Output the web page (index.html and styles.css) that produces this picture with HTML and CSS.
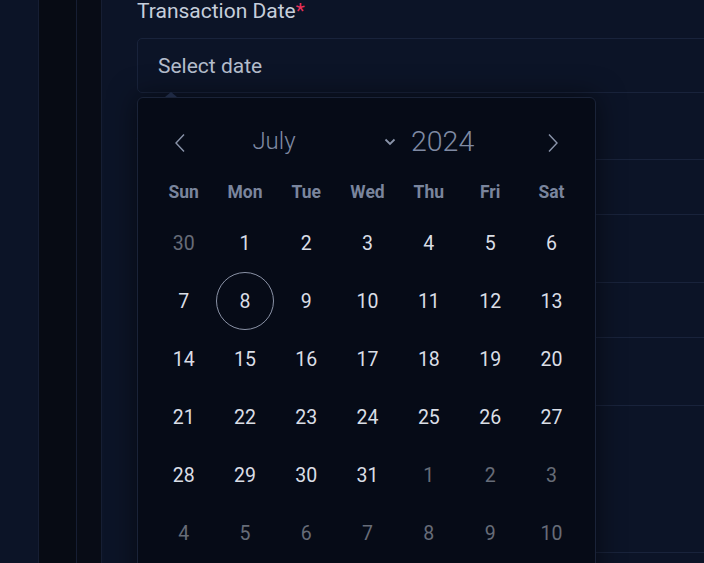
FILE: index.html
```html
<!DOCTYPE html>
<html lang="en">
<head>
<meta charset="utf-8">
<title>Transaction Date</title>
<link rel="stylesheet" href="styles.css">
</head>
<body>
<div class="page">
  <div class="strip strip-a"></div>
  <div class="strip strip-b"></div>
  <div class="strip strip-c"></div>
  <main class="main">
    <div class="field field-date">
      <label class="label">Transaction Date<span class="req">*</span></label>
      <div class="input">Select date</div>
      <div class="picker">
        <div class="caret"></div>
        <div class="cal-head">
          <button class="nav prev" aria-label="Previous month">
            <svg width="12" height="20" viewBox="0 0 12 20"><path d="M10 1.5 L2 10 L10 18.5" fill="none" stroke="#8a94aa" stroke-width="1.4"/></svg>
          </button>
          <div class="month">July</div>
          <div class="chev">
            <svg width="12" height="8" viewBox="0 0 12 8"><path d="M1.5 1.5 L6 6 L10.5 1.5" fill="none" stroke="#8a94aa" stroke-width="1.8"/></svg>
          </div>
          <div class="year">2024</div>
          <button class="nav next" aria-label="Next month">
            <svg width="12" height="20" viewBox="0 0 12 20"><path d="M2 1.5 L10 10 L2 18.5" fill="none" stroke="#8a94aa" stroke-width="1.4"/></svg>
          </button>
        </div>
        <div class="grid weekdays">
          <div>Sun</div><div>Mon</div><div>Tue</div><div>Wed</div><div>Thu</div><div>Fri</div><div>Sat</div>
        </div>
        <div class="grid days">
          <div class="muted">30</div><div>1</div><div>2</div><div>3</div><div>4</div><div>5</div><div>6</div>
          <div>7</div><div class="today"><span>8</span></div><div>9</div><div>10</div><div>11</div><div>12</div><div>13</div>
          <div>14</div><div>15</div><div>16</div><div>17</div><div>18</div><div>19</div><div>20</div>
          <div>21</div><div>22</div><div>23</div><div>24</div><div>25</div><div>26</div><div>27</div>
          <div>28</div><div>29</div><div>30</div><div>31</div><div class="muted">1</div><div class="muted">2</div><div class="muted">3</div>
          <div class="muted">4</div><div class="muted">5</div><div class="muted">6</div><div class="muted">7</div><div class="muted">8</div><div class="muted">9</div><div class="muted">10</div>
        </div>
      </div>
    </div>
    <div class="field">
      <label class="label">Amount</label>
      <div class="input"></div>
    </div>
    <div class="field">
      <label class="label">Category</label>
      <div class="input"></div>
    </div>
    <div class="field">
      <label class="label">Notes</label>
      <div class="input textarea"></div>
    </div>
  </main>
</div>
</body>
</html>
```

FILE: styles.css
```css
html, body {
  margin: 0;
  padding: 0;
  background: #0c1427;
  overflow: hidden;
  height: 563px;
}
body {
  font-family: Roboto, "Liberation Sans", sans-serif;
}
.page {
  display: flex;
  height: 563px;
}
.strip {
  flex: none;
  height: 100%;
}
.strip-a {
  width: 38px;
  background: #0c1427;
  border-right: 1px solid #161e33;
}
.strip-b {
  width: 37px;
  background: #070b14;
  border-right: 1px solid #161e33;
}
.strip-c {
  width: 24px;
  background: #080c16;
  border-right: 1px solid #161e33;
}
.main {
  flex: none;
  width: 620px;
  padding-left: 35px;
  margin-top: -2px;
}
.field {
  position: relative;
  margin-bottom: 27px;
}
.field-date {
  margin-bottom: 26px;
}
.label {
  display: block;
  font-size: 21px;
  line-height: 26px;
  color: #c6cedb;
  margin-bottom: 14px;
}
.req {
  color: #e8305a;
}
.input {
  height: 54px;
  border: 1px solid #19233b;
  border-radius: 5px;
  box-sizing: content-box;
  display: flex;
  align-items: center;
  padding-left: 20px;
  font-size: 21px;
  color: #b4bdcc;
}
.field-date .input {
  height: 53px;
}
.textarea {
  height: 146px;
}
.picker {
  position: absolute;
  left: 0;
  top: 99px;
  width: 457px;
  height: 480px;
  background: #060b17;
  border: 1px solid #1a2338;
  border-radius: 6px;
  box-shadow: 0 0 28px rgba(0, 0, 0, 0.55);
  z-index: 5;
  padding-top: 20px;
  box-sizing: content-box;
}
.caret {
  position: absolute;
  top: -6px;
  left: 27px;
  width: 0;
  height: 0;
  border-left: 6px solid transparent;
  border-right: 6px solid transparent;
  border-bottom: 5px solid #1e2943;
}
.cal-head {
  display: flex;
  align-items: center;
  height: 46px;
  padding-left: 28px;
}
.nav {
  background: none;
  border: 0;
  padding: 0;
  width: 28px;
  height: 30px;
  display: flex;
  align-items: center;
  justify-content: center;
  margin-top: 3px;
}
.month {
  width: 152px;
  text-align: center;
  font-size: 24px;
  font-weight: 300;
  color: #7f8aa3;
  margin-left: 4px;
}
.chev {
  width: 14px;
  display: flex;
  align-items: center;
  margin-left: 34px;
  margin-top: 2px;
}
.year {
  font-size: 28.5px;
  font-weight: 300;
  color: #7f8aa3;
  margin-left: 13px;
  width: 128px;
}
.grid {
  display: grid;
  grid-template-columns: repeat(7, 61.3px);
  margin-left: 15px;
}
.weekdays {
  height: 50px;
  box-sizing: border-box;
  padding-top: 5px;
  align-items: center;
}
.weekdays div {
  text-align: center;
  font-size: 17.5px;
  font-weight: 700;
  color: #7a859d;
}
.days div {
  height: 58px;
  display: flex;
  align-items: center;
  justify-content: center;
  font-size: 19.5px;
  color: #dadee6;
}
.days .muted {
  color: #666c78;
}
.days .today span {
  width: 56px;
  height: 56px;
  border: 1px solid #8a92a6;
  border-radius: 50%;
  display: flex;
  align-items: center;
  justify-content: center;
}
```
